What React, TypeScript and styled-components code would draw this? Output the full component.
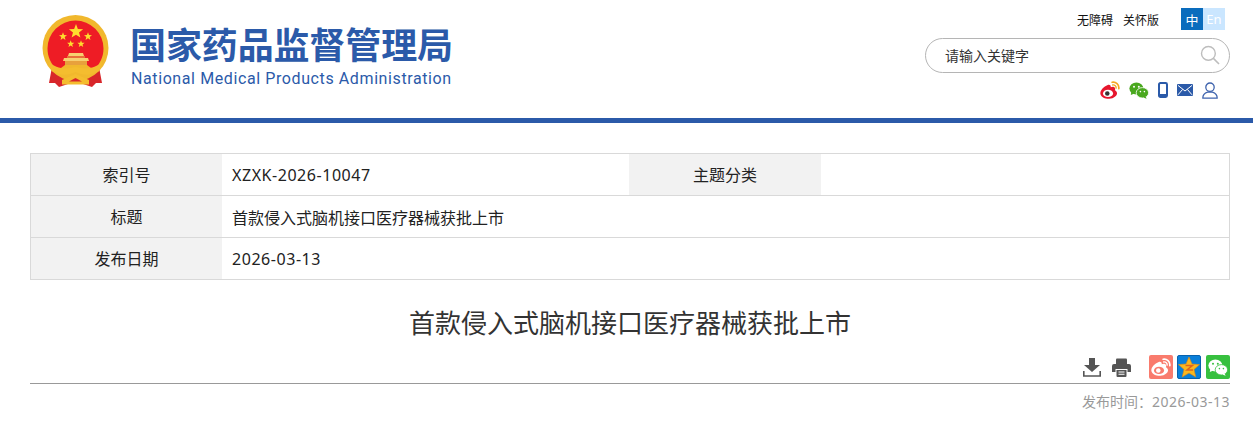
import React from "react";
import styled, { createGlobalStyle } from "styled-components";

const GlobalStyle = createGlobalStyle`
    html, body {
        margin: 0;
        padding: 0;
        background: #fff;
        font-family: "Noto Sans", "Noto Sans CJK SC", sans-serif;
    }
`;

const Header = styled.header`
    display: flex;
    justify-content: space-between;
    height: 118px;
    padding: 0 23px 0 42px;
    box-sizing: content-box;
    border-bottom: 5px solid #2b5aa9;
`;

const Brand = styled.div`
    display: flex;
    align-items: flex-start;
    gap: 21px;
    padding-top: 15px;
`;

const BrandText = styled.div`
    display: flex;
    flex-direction: column;
    color: #2b5aa9;
`;

const BrandName = styled.div`
    margin-top: 2px;
    font-family: "Noto Sans CJK SC", sans-serif;
    font-size: 36px;
    font-weight: 700;
    line-height: 52px;
    letter-spacing: -0.12px;
    white-space: nowrap;
`;

const BrandEnglish = styled.div`
    margin: 0 0 0 1px;
    font-family: "Roboto", sans-serif;
    font-size: 16px;
    line-height: 20px;
    letter-spacing: 0.6px;
    white-space: nowrap;
`;

const Tools = styled.div`
    display: flex;
    flex-direction: column;
    align-items: flex-end;
    width: 305px;
    padding-top: 8px;
`;

const TopLinks = styled.div`
    display: flex;
    align-items: center;
    height: 22px;
    margin-right: 5px;
`;

const TopLink = styled.a`
    margin-right: 10px;
    font-family: "Noto Sans CJK SC", sans-serif;
    font-size: 12px;
    color: #111;
    &:nth-child(2) {
        margin-right: 22px;
    }
`;

const Lang = styled.span<{ $active?: boolean }>`
    display: flex;
    align-items: center;
    justify-content: center;
    width: 22px;
    height: 22px;
    font-size: 13px;
    color: #fff;
    background: ${p => (p.$active ? "#0a6cbd" : "#cae6ff")};
`;

const Search = styled.div`
    display: flex;
    align-items: center;
    justify-content: space-between;
    width: 100%;
    height: 35px;
    margin-top: 8px;
    padding: 0 9px 2px 19px;
    box-sizing: border-box;
    border: 1px solid #b5b5b5;
    border-radius: 18px;
    font-family: "Noto Sans CJK SC", sans-serif;
    font-size: 14px;
    color: #333;
`;

const Socials = styled.div`
    display: flex;
    align-items: center;
    gap: 9px;
    height: 18px;
    margin-top: 8px;
    margin-right: 12px;
`;

const Main = styled.main`
    padding: 30px 23px 0 30px;
`;

const InfoTable = styled.table`
    width: 1200px;
    border-collapse: collapse;
    table-layout: fixed;
    border: 1px solid #d9d9d9;
    font-size: 16px;
    color: #222;
`;

const Row = styled.tr`
    height: 42px;
    border-bottom: 1px solid #d9d9d9;
`;

const Label = styled.td<{ $width?: number }>`
    width: ${p => p.$width ?? 192}px;
    padding: 0 0 2px;
    text-align: center;
    background: #f2f2f2;
    font-family: "Noto Sans CJK SC", sans-serif;
`;

const Value = styled.td<{ $spaced?: boolean; $width?: number }>`
    ${p => (p.$width ? `width: ${p.$width - 10}px;` : "")}
    padding: 0 0 0 10px;
    font-family: "Noto Sans", "Noto Sans CJK SC", sans-serif;
    letter-spacing: ${p => (p.$spaced ? "0.55px" : "0")};
`;

const Title = styled.h1`
    margin: 20px 0 0;
    font-family: "Noto Sans CJK SC", sans-serif;
    font-size: 26px;
    font-weight: 400;
    line-height: 43px;
    text-align: center;
    color: #333;
`;

const ActionBar = styled.div`
    display: flex;
    align-items: flex-start;
    justify-content: flex-end;
    height: 28px;
    margin-top: 12px;
    border-bottom: 1px solid #999;
`;

const ActionIcon = styled.span<{ $gap: number }>`
    display: flex;
    margin-top: 3px;
    margin-right: ${p => p.$gap}px;
`;

const ShareButton = styled.span<{ $bg: string; $edge?: string; $gap?: number }>`
    display: flex;
    align-items: center;
    justify-content: center;
    width: 24px;
    height: 24px;
    margin-left: ${p => p.$gap ?? 4}px;
    box-sizing: border-box;
    border-radius: 2px;
    background: ${p => p.$bg};
    border: ${p => (p.$edge ? `1px solid ${p.$edge}` : "none")};
`;

const PublishDate = styled.div`
    margin-top: 8px;
    font-size: 14px;
    line-height: 20px;
    text-align: right;
    color: #999;
`;

const DateDigits = styled.span`
    letter-spacing: 0.5px;
`;

const starPoints = (cx: number, cy: number, r: number) =>
    Array.from({ length: 10 }, (_, i) => {
        const radius = i % 2 === 0 ? r : r * 0.42;
        const angle = (Math.PI / 5) * i - Math.PI / 2;
        return `${(cx + radius * Math.cos(angle)).toFixed(2)},${(cy + radius * Math.sin(angle)).toFixed(2)}`;
    }).join(" ");

const Emblem = () => (
    <svg width="67" height="72" viewBox="0 0 67 72">
        <path d="M10 52 L7 68 L13 68 L17 72 L26 69 L41 69 L50 72 L54 68 L60 68 L57 52 Z" fill="#d8262a" />
        <circle cx="33.5" cy="33" r="33" fill="#f1b82d" />
        <path d="M5.5 33.5 A28 28 0 0 1 61.5 33.5 C61.5 42 58 48 54 53 L13 53 C9 48 5.5 42 5.5 33.5 Z" fill="#ee1c25" />
        <polygon points={starPoints(34, 16.5, 7.5)} fill="#ffdc2e" />
        <polygon points={starPoints(21, 21.5, 4.2)} fill="#ffdc2e" />
        <polygon points={starPoints(46, 21.5, 4.2)} fill="#ffdc2e" />
        <polygon points={starPoints(28.7, 29, 3.8)} fill="#ffdc2e" />
        <polygon points={starPoints(39, 29, 3.8)} fill="#ffdc2e" />
        <path d="M27 38 H41 L42 41 H26 Z" fill="#f7d070" />
        <path d="M22 43 H46 L47 46 H21 Z" fill="#f7d070" />
        <rect x="23" y="46" width="22" height="5" fill="#e8a13c" />
        <rect x="25" y="41" width="18" height="2" fill="#e8703a" />
        <path d="M23 50 H45 L49 53 H19 Z" fill="#f1b82d" />
        <path d="M7 47 C13 53 23 55 33.5 52 C44 55 54 53 60 47 L58 55 C49 62 40 60 33.5 57 C27 60 18 62 9 55 Z" fill="#f4bd2f" />
        <path d="M20 65 L33.5 59 L47 65 L47 69.5 L20 69.5 Z" fill="#f4bd2f" />
        <path d="M27 66.5 L33.5 63 L40 66.5 Z" fill="#d8262a" />
    </svg>
);

const Weibo = ({ body = "#e6162d", face = "#fff", eye = "#333", arc = "#f5a623", size = 20 }) => (
    <svg width={size} height={size * 0.9} viewBox="0 0 22 20">
        <path d="M8.5 4.5 C3.5 6.5 -.5 11 .4 14.8 C1.4 18.4 6 20 10.2 19.8 C15.4 19.4 18.8 16.4 18.8 13.6 C18.8 11.6 17 10.8 16.4 10.4 C17 8.8 17 7 15.2 6.6 C13.8 6.3 12.4 6.8 11.8 7 C12.2 4.8 10.6 3.6 8.5 4.5 Z" fill={body} />
        <ellipse cx="8.8" cy="13.8" rx="5.6" ry="4" fill={face} />
        <circle cx="8" cy="14" r="2.5" fill={eye} />
        <path d="M13.4 1.4 C17.4 .6 21.4 4 20.8 8.6" fill="none" stroke={arc} strokeWidth="1.9" strokeLinecap="round" />
        <path d="M14 4.4 C16.2 4 18.2 5.8 17.8 7.8" fill="none" stroke={arc} strokeWidth="1.6" strokeLinecap="round" />
    </svg>
);

const Wechat = ({ back = "#4aa81f", front = "#4aa81f", dot = "#fff", gap = "#fff", size = 20 }) => (
    <svg width={size} height={size * 0.85} viewBox="0 0 20 17">
        <ellipse cx="7.4" cy="6.4" rx="7" ry="6" fill={back} />
        <path d="M2.4 9.6 L1.8 13 L5.4 11.4 Z" fill={back} />
        <ellipse cx="13.4" cy="10.8" rx="6.2" ry="5.2" fill={front} stroke={gap} strokeWidth="0.8" />
        <path d="M16.6 14.4 L17.6 16.8 L14.4 15.6 Z" fill={front} />
        <circle cx="5" cy="4.8" r="1" fill={dot} />
        <circle cx="9.8" cy="4.8" r="1" fill={dot} />
        <circle cx="11.4" cy="9.6" r="0.8" fill={dot} />
        <circle cx="15.4" cy="9.6" r="0.8" fill={dot} />
    </svg>
);

const Phone = () => (
    <svg width="10" height="16" viewBox="0 0 10 16">
        <rect x="1" y="1" width="8" height="14" rx="1.4" fill="none" stroke="#2b5aa9" strokeWidth="2" />
        <rect x="1" y="12" width="8" height="3" fill="#2b5aa9" />
    </svg>
);

const Mail = () => (
    <svg width="16" height="12" viewBox="0 0 16 12">
        <rect width="16" height="12" rx="1" fill="#2b5aa9" />
        <path d="M1 1.4 L8 7 L15 1.4 M1 10.8 L5.6 5.4 M15 10.8 L10.4 5.4" fill="none" stroke="#fff" strokeWidth="1" />
    </svg>
);

const User = () => (
    <svg width="16" height="17" viewBox="0 0 16 17">
        <circle cx="8" cy="5.2" r="4.2" fill="none" stroke="#3e63ad" strokeWidth="1.3" />
        <path d="M.8 16.2 C.8 12 3.6 10.8 5.6 10.2 H10.4 C12.4 10.8 15.2 12 15.2 16.2 Z" fill="none" stroke="#3e63ad" strokeWidth="1.3" strokeLinejoin="round" />
    </svg>
);

const SearchIcon = () => (
    <svg width="20" height="20" viewBox="0 0 20 20">
        <circle cx="8.4" cy="8.4" r="6.9" fill="none" stroke="#bdbdbd" strokeWidth="1.4" />
        <path d="M13.4 13.4 L19 19" stroke="#bdbdbd" strokeWidth="1.6" />
    </svg>
);

const Download = () => (
    <svg width="18" height="19" viewBox="0 0 18 19">
        <path d="M6 0 H12 V7 H17 L9 14 L1 7 H6 Z" fill="#555" />
        <path d="M0.8 13 V18 H17.2 V13" fill="none" stroke="#555" strokeWidth="1.6" />
    </svg>
);

const Printer = () => (
    <svg width="19" height="19" viewBox="0 0 19 19">
        <path d="M4 6 V1.5 Q4 .5 5 .5 H14 Q15 .5 15 1.5 V6 Z" fill="#555" />
        <path d="M2 6 H17 Q19 6 19 8 V14 H15.5 V11 H3.5 V14 H0 V8 Q0 6 2 6 Z" fill="#555" />
        <path d="M4.5 12 H14.5 V18 Q14.5 19 13.5 19 H5.5 Q4.5 19 4.5 18 Z" fill="#555" />
        <path d="M6.5 14 H12.5 M6.5 16.2 H12.5" stroke="#fff" strokeWidth="1.1" />
    </svg>
);

const QzoneStar = () => (
    <svg width="22" height="22" viewBox="0 0 22 22">
        <polygon points="11,1 14,8 21.5,8.6 16,13.4 17.8,21 11,17 4.2,21 6,13.4 .5,8.6 8,8" fill="#fbb81f" stroke="#e08a12" strokeWidth=".6" />
        <path d="M7.5 9.4 H14.5 L9 14 H15" fill="none" stroke="#e0641e" strokeWidth="1.5" />
    </svg>
);

export default function App() {
    return (
        <>
            <GlobalStyle />
            <Header>
                <Brand>
                    <Emblem />
                    <BrandText>
                        <BrandName>国家药品监督管理局</BrandName>
                        <BrandEnglish>National Medical Products Administration</BrandEnglish>
                    </BrandText>
                </Brand>
                <Tools>
                    <TopLinks>
                        <TopLink>无障碍</TopLink>
                        <TopLink>关怀版</TopLink>
                        <Lang $active>中</Lang>
                        <Lang>En</Lang>
                    </TopLinks>
                    <Search>
                        请输入关键字
                        <SearchIcon />
                    </Search>
                    <Socials>
                        <Weibo />
                        <Wechat />
                        <Phone />
                        <Mail />
                        <User />
                    </Socials>
                </Tools>
            </Header>
            <Main>
                <InfoTable>
                    <tbody>
                        <Row>
                            <Label $width={191}>索引号</Label>
                            <Value $spaced $width={407}>XZXK-2026-10047</Value>
                            <Label>主题分类</Label>
                            <Value />
                        </Row>
                        <Row>
                            <Label>标题</Label>
                            <Value colSpan={3}>首款侵入式脑机接口医疗器械获批上市</Value>
                        </Row>
                        <Row>
                            <Label>发布日期</Label>
                            <Value $spaced colSpan={3}>2026-03-13</Value>
                        </Row>
                    </tbody>
                </InfoTable>
                <Title>首款侵入式脑机接口医疗器械获批上市</Title>
                <ActionBar>
                    <ActionIcon $gap={11}>
                        <Download />
                    </ActionIcon>
                    <ActionIcon $gap={14}>
                        <Printer />
                    </ActionIcon>
                    <ShareButton $bg="#f97b6d">
                        <Weibo body="#fff" face="#f97b6d" eye="#fff" arc="#fff" size={20} />
                    </ShareButton>
                    <ShareButton $bg="#0a7fd9" $edge="#0862ad">
                        <QzoneStar />
                    </ShareButton>
                    <ShareButton $bg="#37c03f" $gap={5}>
                        <Wechat back="#fff" front="#fff" dot="#37c03f" gap="#37c03f" size={20} />
                    </ShareButton>
                </ActionBar>
                <PublishDate>发布时间：<DateDigits>2026-03-13</DateDigits></PublishDate>
            </Main>
        </>
    );
}
